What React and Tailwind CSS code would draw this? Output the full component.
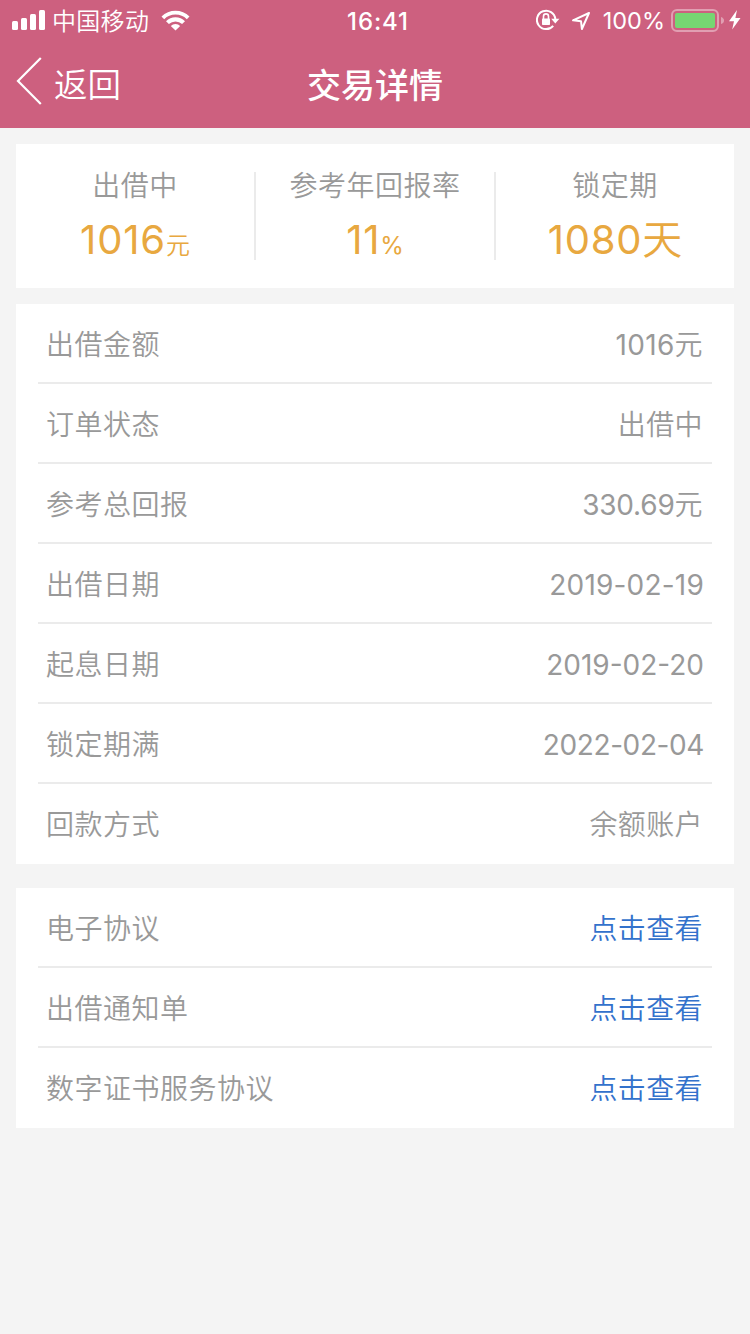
const details = [
  { label: "出借金额", number: "1016", text: "元", spacing: "tracking-[0.3px]" },
  { label: "订单状态", text: "出借中" },
  { label: "参考总回报", number: "330.69", text: "元", spacing: "tracking-[-0.2px]" },
  { label: "出借日期", number: "2019-02-19", spacing: "tracking-[0.2px]" },
  { label: "起息日期", number: "2019-02-20", spacing: "tracking-[0px]" },
  { label: "锁定期满", number: "2022-02-04", spacing: "tracking-[-0.4px]" },
  { label: "回款方式", text: "余额账户" },
];

const agreements = ["电子协议", "出借通知单", "数字证书服务协议"];

function StatusBar() {
  return (
    <div className="grid h-10 grid-cols-3 items-center text-[24px] leading-9">
      <div className="flex items-center pl-3">
        <svg width="33" height="20" viewBox="0 0 33 20" fill="#fff">
          <rect x="0" y="11" width="6" height="9" rx="1.5" />
          <rect x="9" y="8" width="6" height="12" rx="1.5" />
          <rect x="18" y="4" width="6" height="16" rx="1.5" />
          <rect x="27" y="0" width="6" height="20" rx="1.5" />
        </svg>
        <span className="ml-[7px] pt-[3px] whitespace-nowrap font-[350] tracking-[0.3px]">中国移动</span>
        <svg className="ml-[12px]" width="29" height="21" viewBox="0 0 29 21" fill="#fff">
          <path d="M.5 6.400a20 20 0 0 1 28 0l-2.700 2.800a16.200 16.200 0 0 0-22.600 0z" />
          <path d="M5 11.200a13.500 13.500 0 0 1 19 0l-2.900 2.900a9.500 9.500 0 0 0-13.200 0z" />
          <path d="M9.800 16a6.700 6.700 0 0 1 9.400 0l-4.700 4.600z" />
        </svg>
      </div>
      <div className="pt-[3px] pl-1.5 text-center text-[24px] font-medium tracking-[0.9px]">16:41</div>
      <div className="flex items-center justify-end pr-[9px]">
        <svg width="24" height="22" viewBox="0 0 24 22" fill="none" stroke="#fff" strokeWidth="2">
          <path d="M17.200 16.800A9.200 9.200 0 1 1 19.300 10" />
          <path d="M15.200 9.800h8.200l-4.100 4.600z" fill="#fff" stroke="none" />
          <rect x="6" y="9.5" width="8" height="6.500" rx="0.8" fill="#fff" stroke="none" />
          <path d="M7.500 10V7.400a2.500 2.500 0 0 1 5 0V10" strokeWidth="1.6" />
        </svg>
        <svg className="mt-px ml-[11px]" width="20" height="20" viewBox="0 0 20 20" fill="none" stroke="#fff" strokeWidth="2" strokeLinejoin="round">
          <path d="M18 2L2 9.300l8 .9.900 7.800z" />
        </svg>
        <span className="ml-[12px] pt-0.5 text-[23.5px]">100%</span>
        <svg className="mt-px ml-[6px]" width="54" height="23" viewBox="0 0 54 23">
          <rect x="1" y="1" width="46" height="21" rx="5" fill="none" stroke="#fff" strokeOpacity="0.4" strokeWidth="2" />
          <rect x="4" y="4" width="40" height="15" rx="2" fill="#76d672" />
          <path d="M50 8q3 1 3 3.500t-3 3.500z" fill="#fff" fillOpacity="0.4" />
        </svg>
        <svg className="ml-1" width="12" height="20" viewBox="0 0 12 20" fill="#fff">
          <path d="M8 0L0 11.200h5L3.200 19.500 11.500 8H6.400z" />
        </svg>
      </div>
    </div>
  );
}

function NavBar() {
  return (
    <div className="grid h-[88px] grid-cols-3 items-center">
      <button className="-mt-1.5 flex items-center pl-4 text-[33.5px]">
        <svg width="26" height="48" viewBox="0 0 26 48" fill="none" stroke="#fff" strokeWidth="2.2">
          <path d="M24.800 1L2 24l22.800 23" />
        </svg>
        <span className="ml-3 pt-2 font-[350]">返回</span>
      </button>
      <h1 className="pt-0.5 text-center text-[34px] font-medium">交易详情</h1>
    </div>
  );
}

function Stat({ label, value, unit, unitClass }) {
  return (
    <div className="flex-1 text-center">
      <p className="text-[28px] leading-7 font-[350] tracking-[0.5px] text-[#999]">{label}</p>
      <p className="mt-4 text-[40px] leading-[48px] text-[#e8a840]">
        <span className="tracking-[0.8px]">{value}</span>
        <span className={unitClass}>{unit}</span>
      </p>
    </div>
  );
}

function Row({ label, children }) {
  return (
    <li className="flex h-20 items-center justify-between border-b-2 border-[#ebebeb] px-2 pt-1 text-[28px] font-[350] text-[#999] last:border-transparent">
      <span className="tracking-[0.5px]">{label}</span>
      {children}
    </li>
  );
}

export default function App() {
  return (
    <div className="min-h-screen bg-[#f4f4f4] font-['Inter','Noto_Sans_CJK_SC',sans-serif]">
      <header className="bg-[#cd607f] text-white">
        <StatusBar />
        <NavBar />
      </header>

      <main className="px-4 pt-4">
        <section className="flex h-36 bg-white py-7">
          <Stat label="出借中" value="1016" unit="元" unitClass="text-[24px] font-[350]" />
          <div className="w-0.5 bg-[#ebebeb]" />
          <Stat label="参考年回报率" value="11" unit="%" unitClass="text-[24px]" />
          <div className="w-0.5 bg-[#ebebeb]" />
          <Stat label="锁定期" value="1080" unit="天" unitClass="font-[350]" />
        </section>

        <ul className="mt-4 bg-white px-[22px]">
          {details.map(({ label, number, text, spacing }) => (
            <Row key={label} label={label}>
              <span>
                {number && <span className={`font-normal ${spacing}`}>{number}</span>}
                {text && <span className="mr-px tracking-[0.4px]">{text}</span>}
              </span>
            </Row>
          ))}
        </ul>

        <ul className="mt-6 bg-white px-[22px]">
          {agreements.map((name) => (
            <Row key={name} label={name}>
              <a href="#" className="mr-px tracking-[0.4px] text-[#3372cc]">点击查看</a>
            </Row>
          ))}
        </ul>
      </main>
    </div>
  );
}
